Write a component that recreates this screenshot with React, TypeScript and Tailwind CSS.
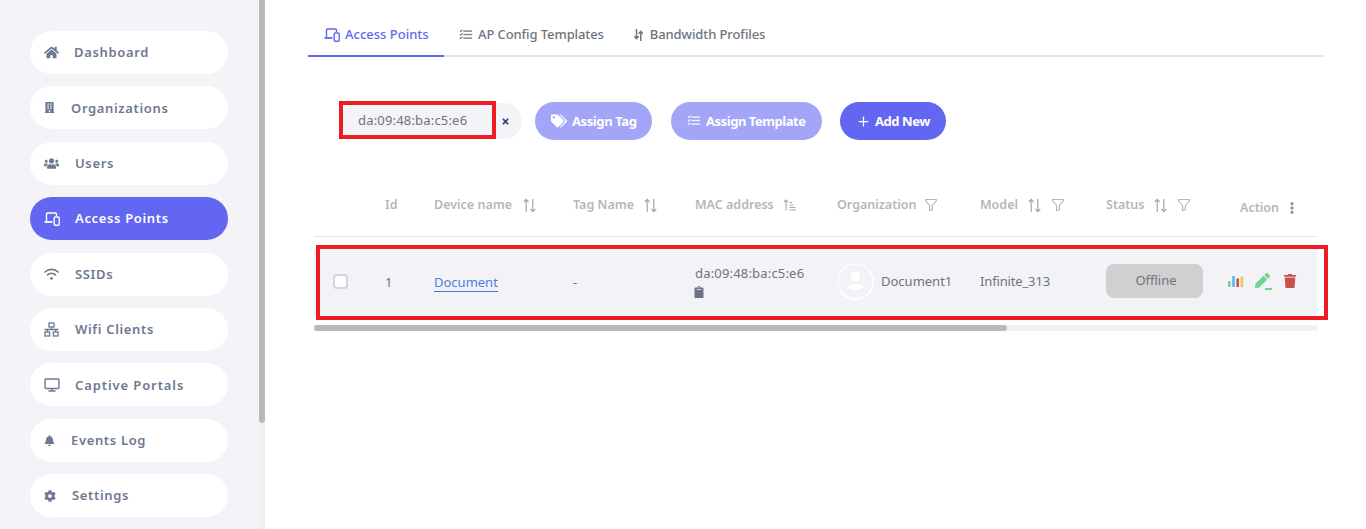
import React from "react";
import { FaHome, FaBuilding, FaUsers, FaBell, FaCog, FaClipboard, FaTrash, FaPen, FaTags, FaTimes } from "react-icons/fa";
import { BsListCheck, BsFunnel, BsThreeDotsVertical } from "react-icons/bs";
import { Plus } from "lucide-react";

type IconProps = { size?: number; className?: string };

const Devices = ({ size = 16, className = "" }: IconProps) => (
  <svg width={size} height={(size * 14) / 16} viewBox="0 0 16 14" fill="none" stroke="currentColor" strokeWidth="1.4" className={className}>
    <path d="M2.5 9V2.2C2.5 1.5 3 1 3.7 1h7.6c.7 0 1.2.5 1.2 1.2V4" />
    <path d="M.5 10h8" strokeWidth="1.8" />
    <rect x="10.2" y="5" width="5" height="8.3" rx="1" />
  </svg>
);

const Wifi = ({ size = 15, className = "" }: IconProps) => (
  <svg width={size} height={(size * 12) / 15} viewBox="0 0 15 12" fill="none" stroke="currentColor" strokeWidth="1.7" strokeLinecap="round" className={className}>
    <path d="M1 4C4.6.6 10.4.6 14 4" />
    <path d="M3.5 6.8c2.3-2 5.7-2 8 0" />
    <circle cx="7.5" cy="10.4" r="1.4" fill="currentColor" stroke="none" />
  </svg>
);

const Network = ({ size = 15, className = "" }: IconProps) => (
  <svg width={size} height={size} viewBox="0 0 15 15" fill="none" stroke="currentColor" strokeWidth="1.3" className={className}>
    <rect x="5" y="1" width="5" height="4" />
    <rect x="1" y="10" width="4.6" height="4" />
    <rect x="9.4" y="10" width="4.6" height="4" />
    <path d="M7.5 5v2.5M3.3 10V7.5h8.4V10M.5 7.5h14" />
  </svg>
);

const Monitor = ({ size = 16, className = "" }: IconProps) => (
  <svg width={size} height={(size * 14) / 16} viewBox="0 0 16 14" fill="none" stroke="currentColor" strokeWidth="1.4" className={className}>
    <rect x="1" y="1" width="14" height="9.5" rx="1" />
    <path d="M8 10.5v2.5M4.5 13h7" />
  </svg>
);

const ArrowsIcon = ({ className = "" }: IconProps) => (
  <svg width="9" height="14" viewBox="0 0 9 14" fill="none" stroke="currentColor" strokeWidth="1.5" className={className}>
    <path d="M2.5 10.5V1M.3 8.2l2.2 2.4 2.2-2.4" />
    <path d="M6.8 13V3.5M4.6 5.8l2.2-2.4L9 5.8" />
  </svg>
);

const Sort = () => (
  <svg width="13" height="15" viewBox="0 0 13 15" fill="none" stroke="#a3a7b0" strokeWidth="1.2" className="shrink-0">
    <path d="M3.2 14V1.5M.8 4l2.4-2.6L5.6 4" />
    <path d="M9.8 1v12.5M7.4 11l2.4 2.6 2.4-2.6" />
  </svg>
);

const SortAsc = () => (
  <svg width="13" height="12" viewBox="0 0 13 12" fill="none" stroke="#a3a7b0" strokeWidth="1.1" className="shrink-0">
    <path d="M3 11.5V1M1 3l2-2 2 2" />
    <path d="M6.5 3.5h2.5M6.5 6h4M6.5 8.5h6M6.5 11h6.5" />
  </svg>
);

const Funnel = () => <BsFunnel size={14} className="shrink-0 text-[#9a9fa8]" />;

const nav = [
  { label: "Dashboard", Icon: FaHome, gap: "gap-[15px]", size: 15, track: "tracking-[0.65px]" },
  { label: "Organizations", Icon: FaBuilding, gap: "gap-[16px]", size: 11, track: "tracking-[0.65px]" },
  { label: "Users", Icon: FaUsers, gap: "gap-[16px]", size: 15, track: "tracking-[0.65px]" },
  { label: "Access Points", Icon: Devices, gap: "gap-[15px]", size: 16, track: "tracking-[0.65px]", active: true },
  { label: "SSIDs", Icon: Wifi, gap: "gap-[16px]", size: 15, track: "tracking-[0.65px]" },
  { label: "Wifi Clients", Icon: Network, gap: "gap-[16px]", size: 15, track: "tracking-[0.65px]" },
  { label: "Captive Portals", Icon: Monitor, gap: "gap-[15px]", size: 16, track: "tracking-[0.9px]" },
  { label: "Events Log", Icon: FaBell, gap: "gap-[16px]", size: 11, track: "tracking-[0.65px]" },
  { label: "Settings", Icon: FaCog, gap: "gap-[16px]", size: 12, track: "tracking-[0.65px]" },
];

const Head = ({ children, className = "" }: { children: React.ReactNode; className?: string }) => (
  <div className={`flex items-center text-[12.5px] font-semibold text-[#b4b7bd] ${className}`}>{children}</div>
);

const Avatar = () => (
  <svg width="37" height="37" viewBox="0 0 37 37" className="shrink-0">
    <circle cx="18.5" cy="18.5" r="17.5" fill="none" stroke="#fff" strokeWidth="1.5" />
    <circle cx="18.5" cy="13.5" r="4.8" fill="#fff" />
    <ellipse cx="18.5" cy="24" rx="7.5" ry="3.2" fill="#fff" />
  </svg>
);

const Bars = () => (
  <svg width="16" height="12" viewBox="0 0 16 12">
    <rect x="0" y="6" width="2.6" height="6" fill="#6fd593" />
    <rect x="4.2" y="1" width="2.6" height="11" fill="#63b3ed" />
    <rect x="8.4" y="3.5" width="2.6" height="8.5" fill="#c9524a" />
    <rect x="12.6" y="1.5" width="2.6" height="10.5" fill="#f6c25c" />
  </svg>
);

const cols = "grid grid-cols-[52px_49px_139px_122px_142px_143px_126px_122px_108px]";

export default function App() {
  return (
    <div className="flex h-screen overflow-hidden bg-white font-['Noto_Sans',sans-serif]">
      <aside className="flex w-[265px] shrink-0 bg-[#f3f3f8]">
        <nav className="flex w-[259px] flex-col gap-[12.4px] pl-[30px] pt-[31px]">
          {nav.map(({ label, Icon, gap, size, active, track }) => (
            <div
              key={label}
              className={`flex h-[43px] w-[198px] shrink-0 items-center rounded-full pl-[14px] text-[13px] font-semibold ${track} ${gap} ${
                active ? "bg-[#6366f1] text-white" : "bg-white text-[#6e7891]"
              }`}
            >
              <Icon size={size} />
              <span className="relative top-[0.5px]">{label}</span>
            </div>
          ))}
        </nav>
        <div className="w-[6px] bg-[#f1f1f1]">
          <div className="h-[423px] rounded-b-[3px] bg-[#b9b9b9]" />
        </div>
      </aside>

      <main className="relative w-[1058px] pl-[43px] pt-[21px]">
        <div className="flex h-[36px] w-[1015px] border-b-[2px] border-[#dee2e6] text-[13px] font-medium tracking-[-0.1px] text-[#6c757d]">
          <div className="-mb-[2px] flex w-[136px] items-center gap-[5px] border-b-[2px] border-[#6366f1] pb-[6px] pl-[16px] tracking-normal text-[#6366f1]">
            <Devices size={16} />
            <span>Access Points</span>
          </div>
          <div className="ml-[15px] flex items-center gap-[5px] pb-[6px]">
            <BsListCheck size={14} strokeWidth={0.5} />
            <span>AP Config Templates</span>
          </div>
          <div className="ml-[30px] flex items-center gap-[7px] pb-[6px]">
            <ArrowsIcon />
            <span>Bandwidth Profiles</span>
          </div>
        </div>

        <div className="relative ml-[31px] mt-[45px] flex h-[38px] items-center text-[13px]">
          <div className="flex h-[36px] w-[183px] items-center rounded-full bg-[#f3f3f8] pl-[19px] text-[#6c757d]">
            <span className="w-[143px] tracking-[0.18px]">da:09:48:ba:c5:e6</span>
            <FaTimes size={9} className="text-[#2c4a7c]" />
          </div>
          <div className="ml-[13px] flex h-[38px] w-[117px] items-center gap-[5px] rounded-full bg-[#a3a5f7] pl-[16px] font-bold tracking-[-0.4px] text-white">
            <FaTags size={16} />
            <span className="relative top-[1px]">Assign Tag</span>
          </div>
          <div className="ml-[19px] flex h-[38px] w-[151px] items-center gap-[5px] rounded-full bg-[#a3a5f7] pl-[16px] font-bold tracking-[-0.45px] text-white">
            <BsListCheck size={14} strokeWidth={0.5} />
            <span className="relative top-[1px]">Assign Template</span>
          </div>
          <div className="ml-[18px] flex h-[38px] w-[106px] items-center gap-[4px] rounded-full bg-[#6366f1] pl-[16px] font-bold tracking-[-0.45px] text-white">
            <Plus size={15} />
            <span className="relative top-[1px]">Add New</span>
          </div>
          <div className="absolute -top-[1px] left-0 h-[38px] w-[157px] border-[4px] border-[#ed1c24]" />
        </div>

        <div className="ml-[6px] mt-[40px] w-[1003px]">
          <div className={`${cols} h-[57px] items-start border-b border-[#e4e5e8] pt-[16px]`}>
            <div />
            <Head className="pl-[19px]">Id</Head>
            <Head className="gap-[11px] pl-[19px]">Device name <Sort /></Head>
            <Head className="gap-[10px] pl-[19px]">Tag Name <Sort /></Head>
            <Head className="gap-[9px] pl-[19px]">MAC address <SortAsc /></Head>
            <Head className="gap-[8px] pl-[19px]">Organization <Funnel /></Head>
            <Head className="gap-[10px] pl-[19px]">Model <Sort /><Funnel /></Head>
            <Head className="gap-[10px] pl-[19px]">Status <Sort /><Funnel /></Head>
            <Head className="gap-[6px] pl-[31px] pt-[3px]">Action <BsThreeDotsVertical size={14} strokeWidth={0.8} className="text-[#8d939d]" /></Head>
          </div>
          <div className={`${cols} mt-[10px] h-[68px] items-center bg-[#f2f2f7] pt-[4px] text-[13px] text-[#6c757d]`}>
            <div className="-mt-[4px] pl-[19px]">
              <div className="h-[15px] w-[15px] rounded-[4px] border-2 border-[#d3d5da] bg-white" />
            </div>
            <div className="pl-[19px]">1</div>
            <div className="pl-[19px]">
              <span className="border-b border-[#2f7cf6] text-[#4a7fe0]">Document</span>
            </div>
            <div className="pl-[19px]">-</div>
            <div className="-mt-[4px] pl-[19px]">
              <div className="tracking-[0.18px]">da:09:48:ba:c5:e6</div>
              <FaClipboard size={12} className="-ml-[2px] mt-[3px] text-[#6c7383]" />
            </div>
            <div className="-mt-[4px] flex items-center gap-[7px] pl-[19px]">
              <Avatar />
              <span className="relative top-[1px]">Document1</span>
            </div>
            <div className="-mt-[2px] pl-[19px] tracking-[-0.15px]">Infinite_313</div>
            <div className="-mt-[4px] pl-[19px]">
              <div className="flex h-[34px] w-[97px] items-center justify-center rounded-[8px] bg-[#d0d0d0] pl-[3px] text-[#6c757d]">Offline</div>
            </div>
            <div className="-mt-[4px] flex items-center gap-[11px] pl-[19px]">
              <Bars />
              <span className="relative block h-[17px] w-[17px]">
                <FaPen size={15} className="text-[#6fd593]" />
                <span className="absolute bottom-[0px] right-0 h-[1.5px] w-[7px] bg-[#6fd593]" />
              </span>
              <FaTrash size={14} className="text-[#c9524a]" />
            </div>
          </div>
          <div className="mt-[10px] h-[6px] w-[1003px] bg-[#f1f1f1]">
            <div className="h-[6px] w-[693px] rounded-[3px] bg-[#b9b9b9]" />
          </div>
        </div>

        <div className="absolute left-[51px] top-[245px] h-[75px] w-[1012px] border-[4px] border-[#ed1c24]" />
      </main>
    </div>
  );
}
